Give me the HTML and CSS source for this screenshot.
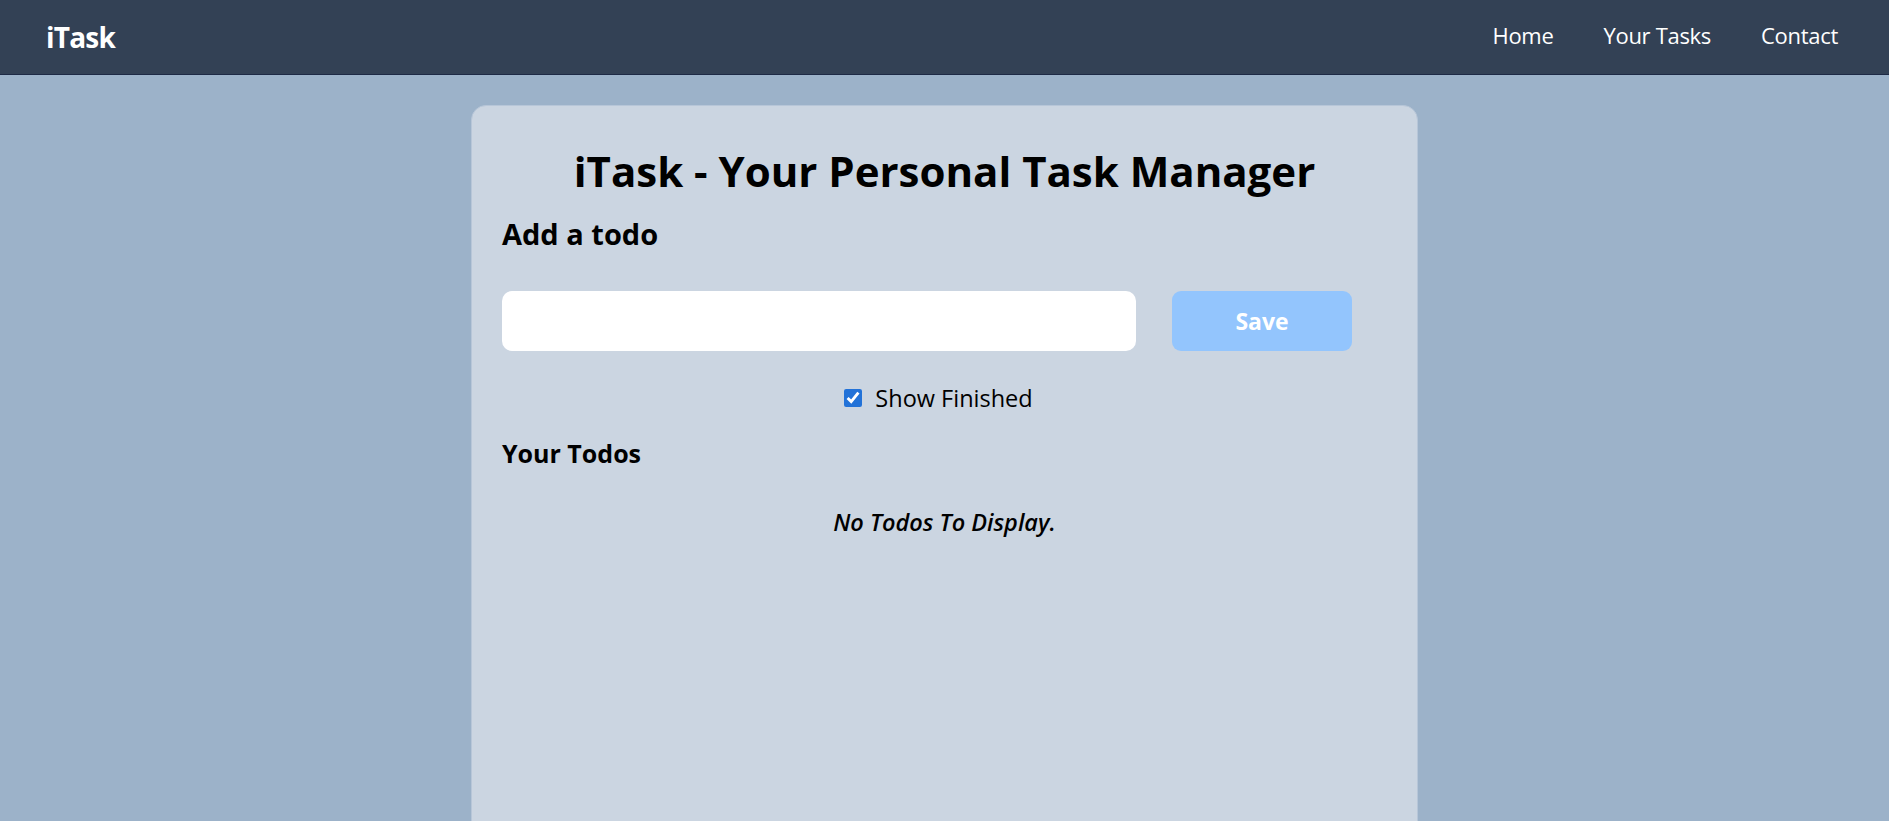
FILE: index.html
```html
<!DOCTYPE html>
<html lang="en">
<head>
<meta charset="utf-8">
<title>iTask - Your Personal Task Manager</title>
<link rel="stylesheet" href="styles.css">
</head>
<body>
<nav class="navbar">
  <span class="logo">iTask</span>
  <ul class="nav-links">
    <li><a href="#">Home</a></li>
    <li><a href="#">Your Tasks</a></li>
    <li><a href="#">Contact</a></li>
  </ul>
</nav>
<main class="card">
  <h1 class="title">iTask - Your Personal Task Manager</h1>
  <h2 class="section-heading">Add a todo</h2>
  <div class="add-row">
    <input class="todo-input" type="text" aria-label="Todo">
    <button class="save-btn" disabled>Save</button>
  </div>
  <label class="show-finished">
    <input type="checkbox" class="finished-box" checked>
    <span>Show Finished</span>
  </label>
  <h2 class="todos-heading">Your Todos</h2>
  <p class="empty">No Todos To Display.</p>
</main>
</body>
</html>
```
FILE: styles.css
```css
* { box-sizing: border-box; }

body {
  margin: 0;
  background: #9cb2c9;
  font-family: "Open Sans", "Noto Sans", sans-serif;
  color: #000;
}

.navbar {
  height: 75px;
  background: #334155;
  border-bottom: 1px solid #1e2a45;
  display: flex;
  align-items: center;
  justify-content: space-between;
  padding: 0 51px 0 46px;
  color: #fff;
}

.logo {
  font-size: 28px;
  font-weight: 700;
  line-height: 40px;
  letter-spacing: -0.8px;
}

.nav-links {
  list-style: none;
  margin: 0 0 5px;
  padding: 0;
  display: flex;
  gap: 50px;
}

.nav-links a {
  color: #fff;
  text-decoration: none;
  font-size: 22px;
  line-height: 32px;
  letter-spacing: -0.3px;
}

.card {
  width: 947px;
  min-height: 800px;
  margin: 30px auto 0;
  background: #cbd5e1;
  border: 1px solid #b7c6d8;
  border-radius: 15px;
  padding: 37px 30px 30px 30px;
}

.title {
  margin: 0;
  text-align: center;
  font-size: 42px;
  line-height: 56px;
  font-weight: 700;
}

.section-heading {
  margin: 15px 0 0;
  font-size: 29px;
  line-height: 40px;
  font-weight: 700;
}

.add-row {
  display: flex;
  gap: 36px;
  margin: 37px 35px 0 0;
}

.todo-input {
  flex: 1;
  height: 60px;
  border: none;
  border-radius: 10px;
  background: #fff;
  padding: 0 14px;
  font: inherit;
  font-size: 22px;
}

.save-btn {
  width: 180px;
  height: 60px;
  border: none;
  border-radius: 9px;
  background: #93c5fd;
  color: #fff;
  font-family: inherit;
  font-weight: 700;
  font-size: 23px;
}

.show-finished {
  display: flex;
  justify-content: center;
  align-items: center;
  gap: 13px;
  margin-top: 31px;
  padding-right: 12px;
  font-size: 23.5px;
  line-height: 32px;
}

.finished-box {
  width: 18px;
  height: 18px;
  margin: 0;
  accent-color: #2272d8;
}

.todos-heading {
  margin: 21px 0 0;
  font-size: 25px;
  line-height: 36px;
  font-weight: 700;
}

.empty {
  margin: 35px 0 0;
  text-align: center;
  font-style: italic;
  font-weight: 600;
  font-size: 23.5px;
  line-height: 32px;
}
```
